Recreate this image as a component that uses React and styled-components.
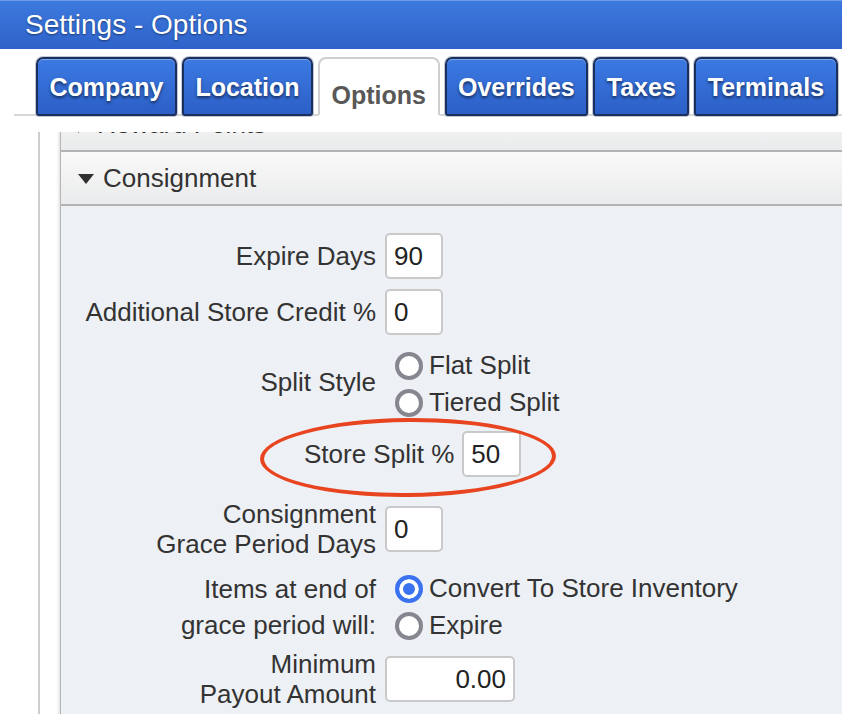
import React, { useLayoutEffect, useRef } from 'react';
import styled, { createGlobalStyle } from 'styled-components';

const GlobalStyle = createGlobalStyle`
  html, body {
    margin: 0;
    padding: 0;
    background: #ffffff;
    overflow: hidden;
  }
  body {
    font-family: "Liberation Sans", Arial, sans-serif;
  }
`;

const Page = styled.div`
  display: flex;
  flex-direction: column;
  height: 100vh;
`;

const TitleBar = styled.div`
  height: 49px;
  flex: none;
  box-sizing: border-box;
  border-top: 1px solid #6f9be6;
  background: linear-gradient(#3c79de, #2f62c9);
`;

const Title = styled.h1`
  margin: 0;
  padding-left: 25px;
  font-size: 28px;
  font-weight: normal;
  line-height: 47px;
  color: #ffffff;
  text-shadow: 0 1px 2px rgba(0, 0, 0, 0.45);
`;

const TabArea = styled.div`
  flex: 1;
  min-height: 0;
  display: flex;
  flex-direction: column;
  margin-left: 14px;
`;

const TabStrip = styled.div`
  flex: none;
  display: flex;
  align-items: flex-end;
  gap: 5px;
  height: 57px;
  margin-top: 8px;
  padding-left: 22px;
  border-bottom: 2px solid #d6d6d6;
`;

const Tab = styled.div`
  height: 59px;
  margin-bottom: -2px;
  box-sizing: border-box;
  padding: ${p => (p.$active ? '17px 11.5px 0' : '2px 11.5px 0')};
  display: flex;
  align-items: center;
  font-size: 25px;
  font-weight: bold;
  white-space: nowrap;
  color: ${p => (p.$active ? '#585858' : '#ffffff')};
  background: ${p => (p.$active ? '#ffffff' : 'linear-gradient(#3b7ae2, #2c5fc7)')};
  border: 2px solid ${p => (p.$active ? '#cfcfcf' : '#1a2f5e')};
  border-bottom: ${p => (p.$active ? '2px solid #ffffff' : '2px solid #1a2f5e')};
  border-radius: ${p => (p.$active ? '8px 8px 0 0' : '7px 7px 3px 3px')};
  box-shadow: ${p =>
    p.$active ? 'none' : 'inset 0 1px 0 rgba(255,255,255,0.35), 0 0 0 1px #c3c9d2'};
  text-shadow: ${p => (p.$active ? 'none' : '0 2px 3px rgba(0, 0, 0, 0.55)')};
`;

const Scroller = styled.div`
  flex: 1;
  min-height: 0;
  margin-top: 16px;
  margin-left: 24px;
  padding-left: 20px;
  border-left: 2px solid #cdcdcd;
  overflow: hidden;
`;

const Accordion = styled.div`
  border-left: 1px solid #b5b5b5;
  box-shadow: -1px 0 3px rgba(0, 0, 0, 0.15);
`;

const SectionHeader = styled.div`
  height: 52px;
  display: flex;
  align-items: center;
  padding-left: 17px;
  border-bottom: 2px solid #b4b4b4;
  background: linear-gradient(#f9f9f9, #eaebec);
  font-size: 26px;
  color: #333333;
`;

const Caret = styled.span`
  width: 0;
  height: 0;
  margin-right: 9px;
  margin-top: 2px;
  border-style: solid;
  border-color: transparent;
  ${p =>
    p.$open
      ? 'border-width: 10px 8px 0 8px; border-top-color: #2f2f2f;'
      : 'border-width: 8px 0 8px 10px; border-left-color: #2f2f2f;'}
`;

const SectionBody = styled.div`
  display: flex;
  flex-direction: column;
  padding: 27px 0 80px 15px;
  background: #edf0f4;
`;

const Row = styled.div`
  display: flex;
  align-items: center;
  gap: 9px;
  margin-top: ${p => p.$mt || 0}px;
`;

const SplitRow = styled(Row)`
  padding-left: 228px;
`;

const Label = styled.div`
  flex: none;
  width: ${p => (p.$auto ? 'auto' : '300px')};
  text-align: right;
  font-size: 26px;
  line-height: ${p => p.$lh || 30}px;
  color: #333333;
  margin-top: ${p => p.$shift || 0}px;
`;

const TextBox = styled.input`
  width: ${p => p.$w}px;
  height: 46px;
  box-sizing: border-box;
  padding: 0 7px;
  border: 2px solid #c9c9c9;
  border-radius: 5px;
  background: #ffffff;
  font-family: inherit;
  font-size: 26px;
  color: #222222;
  text-align: ${p => p.$align || 'left'};
  outline: none;
`;

const RadioGroup = styled.div`
  display: flex;
  flex-direction: column;
  margin-left: 10px;
`;

const RadioOption = styled.label`
  display: flex;
  align-items: center;
  gap: 6px;
  height: 37px;
  font-size: 26px;
  color: #333333;
  white-space: nowrap;
`;

const RadioDot = styled.span`
  flex: none;
  width: 28px;
  height: 28px;
  box-sizing: border-box;
  border-radius: 50%;
  border: 4px solid ${p => (p.$checked ? '#3a72ef' : '#868690')};
  background: ${p => (p.$checked ? '#3a72ef' : '#ffffff')};
  box-shadow: ${p => (p.$checked ? 'inset 0 0 0 4px #ffffff' : 'none')};
`;

const Highlight = styled.div`
  position: relative;
  display: flex;
  align-items: center;
  gap: 8px;
`;

const Ellipse = styled.div`
  position: absolute;
  left: -44px;
  top: -13px;
  width: 296px;
  height: 79px;
  box-sizing: border-box;
  border: 4px solid #e8441f;
  border-radius: 50%;
  transform: rotate(-0.6deg);
  pointer-events: none;
`;

const tabs = ['Company', 'Location', 'Options', 'Overrides', 'Taxes', 'Terminals'];

function Radio({ checked, children }) {
  return (
    <RadioOption>
      <RadioDot $checked={checked} />
      {children}
    </RadioOption>
  );
}

function App() {
  const scrollRef = useRef(null);

  useLayoutEffect(() => {
    if (scrollRef.current) scrollRef.current.scrollTop = 34;
  }, []);

  return (
    <Page>
      <GlobalStyle />
      <TitleBar>
        <Title>Settings - Options</Title>
      </TitleBar>
      <TabArea>
        <TabStrip>
          {tabs.map(t => (
            <Tab key={t} $active={t === 'Options'}>{t}</Tab>
          ))}
        </TabStrip>
        <Scroller ref={scrollRef}>
          <Accordion>
            <SectionHeader>
              <Caret />
              Reward Points
            </SectionHeader>
            <SectionHeader>
              <Caret $open />
              Consignment
            </SectionHeader>
            <SectionBody>
              <Row>
                <Label>Expire Days</Label>
                <TextBox $w={58} defaultValue="90" />
              </Row>
              <Row $mt={10}>
                <Label>Additional Store Credit %</Label>
                <TextBox $w={58} defaultValue="0" />
              </Row>
              <Row $mt={12}>
                <Label $shift={-4}>Split Style</Label>
                <RadioGroup>
                  <Radio>Flat Split</Radio>
                  <Radio>Tiered Split</Radio>
                </RadioGroup>
              </Row>
              <SplitRow $mt={10}>
                <Highlight>
                  <Label $auto>Store Split %</Label>
                  <TextBox $w={59} defaultValue="50" />
                  <Ellipse />
                </Highlight>
              </SplitRow>
              <Row $mt={22}>
                <Label>Consignment<br />Grace Period Days</Label>
                <TextBox $w={58} defaultValue="0" />
              </Row>
              <Row $mt={11}>
                <Label $lh={36}>Items at end of<br />grace period will:</Label>
                <RadioGroup>
                  <Radio checked>Convert To Store Inventory</Radio>
                  <Radio>Expire</Radio>
                </RadioGroup>
              </Row>
              <Row $mt={5}>
                <Label>Minimum<br />Payout Amount</Label>
                <TextBox $w={130} $align="right" defaultValue="0.00" />
              </Row>
            </SectionBody>
          </Accordion>
        </Scroller>
      </TabArea>
    </Page>
  );
}

export default App;
